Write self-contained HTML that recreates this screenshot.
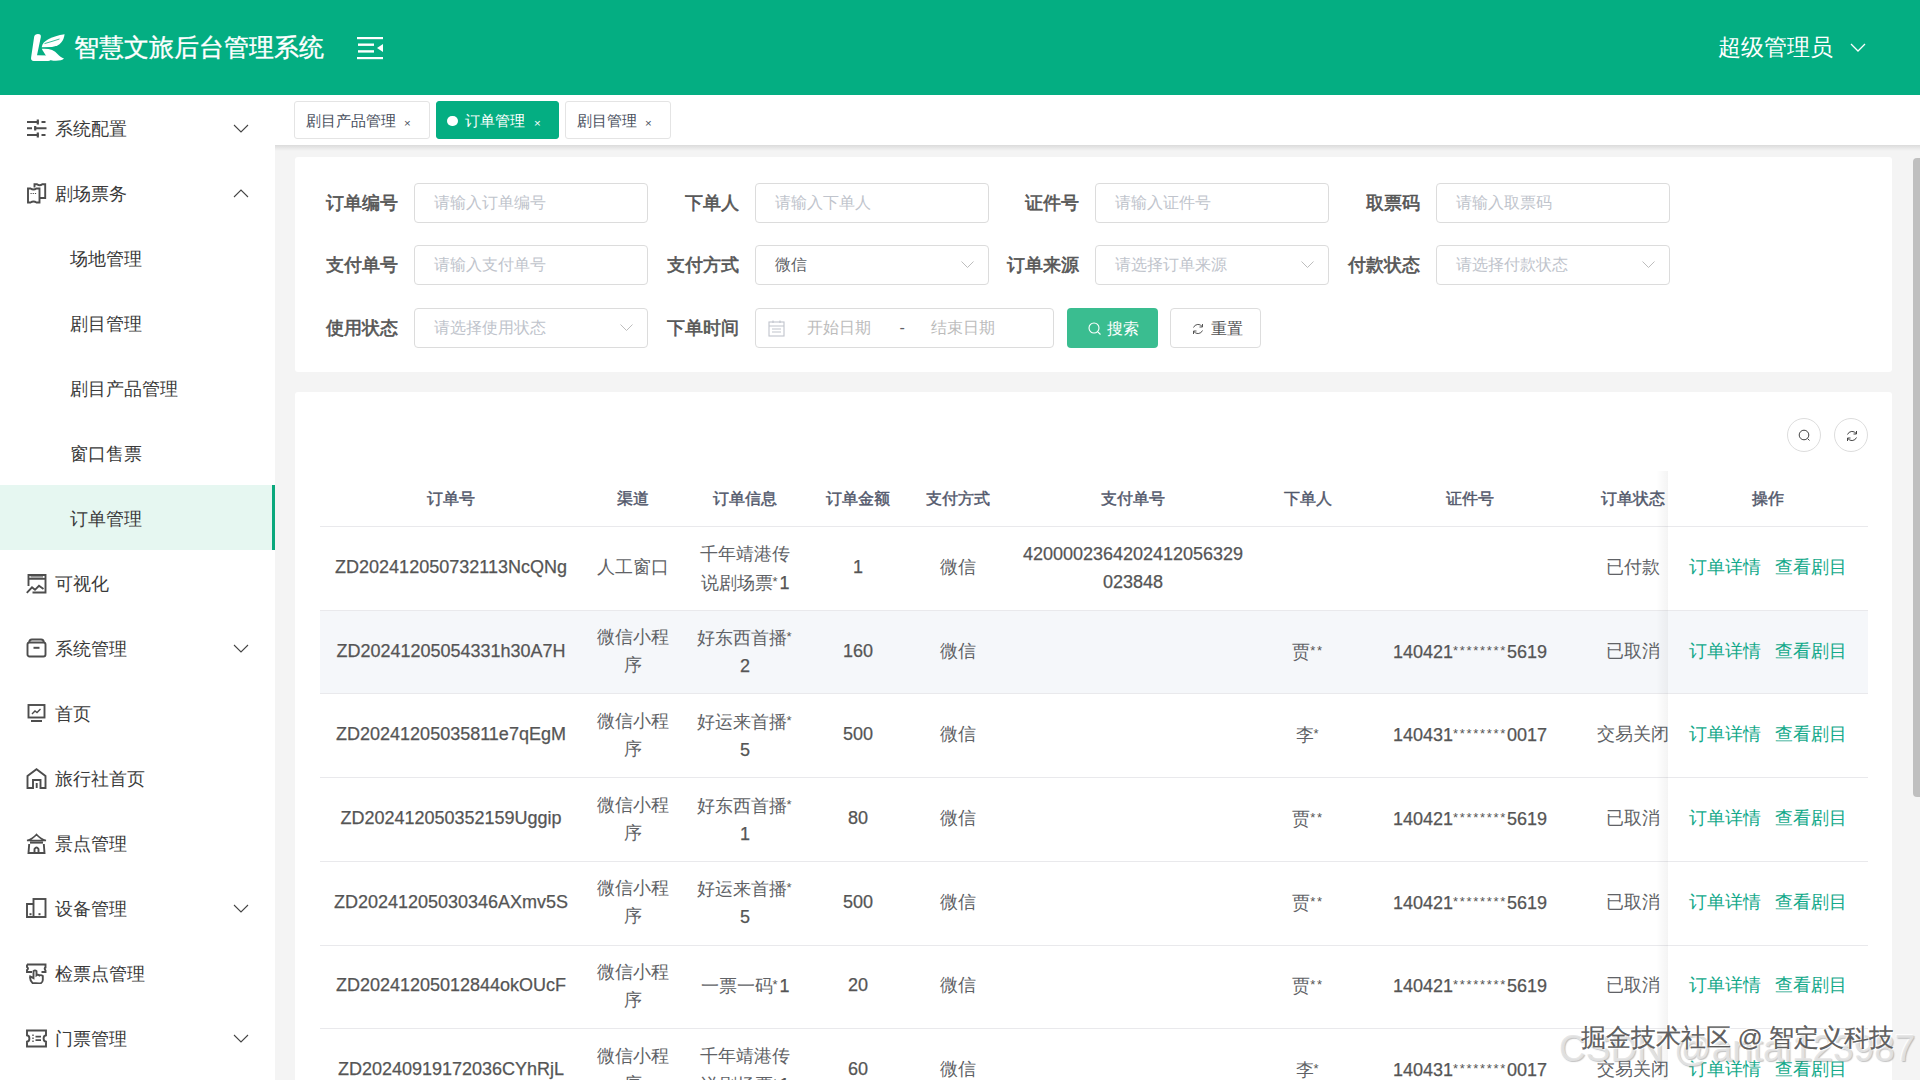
<!DOCTYPE html>
<html><head><meta charset="utf-8">
<style>
*{box-sizing:border-box;margin:0;padding:0}
html,body{width:1920px;height:1080px;overflow:hidden;background:#f4f4f4;font-family:"Liberation Sans",sans-serif}
.a{position:absolute}
#hdr{left:0;top:0;width:1920px;height:95px;background:#04ae82}
#side{left:0;top:95px;width:275px;height:985px;background:#fff}
.mi{position:absolute;left:0;width:275px;height:65px;font-size:17.5px;color:#3a3a3a;line-height:65px}
.mi .t{position:absolute;left:55px;top:2px}
.mi.sub .t{left:70px}
.mi svg.ic{position:absolute;left:26px;top:22.5px}
.mi svg.ch{position:absolute;left:233px;top:29px}
#tabs{left:275px;top:95px;width:1645px;height:50px;background:#fff}
#tabsh{left:275px;top:145px;width:1645px;height:6px;background:linear-gradient(to bottom,rgba(0,0,0,.10),rgba(0,0,0,0))}
.tab{position:absolute;top:6px;height:38px;border:1px solid #e4e4e4;border-radius:3px;background:#fff;font-size:14.8px;color:#495060;line-height:38px}
.tab .x{position:absolute;font-size:11.5px;top:2px}
.card{background:#fff;border-radius:3px}
.lbl{position:absolute;font-size:17.9px;font-weight:normal;-webkit-text-stroke:.6px #555;color:#555;text-align:right;width:120px;line-height:40px}
.inp{position:absolute;height:40px;width:234px;border:1px solid #dcdcdc;border-radius:4px;background:#fff;font-size:16px;color:#bcbcbc;line-height:38.6px;padding-left:19px}
.inp svg{position:absolute;right:13px;top:14px}
.th{position:absolute;top:471px;height:55px;line-height:55px;font-size:15.5px;font-weight:normal;-webkit-text-stroke:.45px #52586b;color:#52586b;text-align:center}
.td{position:absolute;font-size:17.5px;color:#606266;text-align:center;line-height:28px}
.lat{font-size:18px;color:#555;-webkit-text-stroke:.25px #555}
.ast{font-size:13px;letter-spacing:1.7px;color:#555;vertical-align:3px}
.lk{color:#13a98a}
</style></head><body>
<div id="hdr" class="a">
  <svg class="a" style="left:30px;top:33px" width="36" height="30" viewBox="30 33 36 30">
    <path d="M36.5 34.2 Q41.5 33.5 40.8 37.2 L37 55.2 L49.5 55.6 Q52.2 56.2 51.4 59 Q50.8 61 48.2 61 L33.8 61 Q30.6 61 31.1 57.6 L34.2 36.6 Q34.6 34.6 36.5 34.2 Z" fill="#fff"/>
    <path d="M41.7 47.2 C42.5 40.5 52 36.2 64.6 34.3 C63.8 40.5 60.5 46.2 52 46.9 Z" fill="#fff"/>
    <path d="M44.5 43.6 Q52 41.5 59.5 39" stroke="#04ae82" stroke-width="1" fill="none" opacity=".8"/>
    <path d="M41.8 48.8 C49 48.3 54.5 50 57.5 54 C59.5 56.5 61.5 57.5 64 58.6 C62.5 60.8 55 61.5 51 60.2 C47.5 58.5 44 53 41.8 48.8 Z" fill="#fff"/>
  </svg>
  <div class="a" style="left:74px;top:30px;font-size:25px;color:#fff;-webkit-text-stroke:.35px #fff;line-height:34px">智慧文旅后台管理系统</div>
  <svg class="a" style="left:357px;top:36px" width="27" height="24" viewBox="0 0 27 24">
    <rect x="0" y="1" width="26" height="2.2" fill="#fff"/>
    <rect x="1" y="7.5" width="16" height="2.4" fill="#fff"/>
    <rect x="1" y="14.2" width="16" height="2.4" fill="#fff"/>
    <rect x="0" y="21" width="26" height="2.2" fill="#fff"/>
    <path d="M20 12 L26 8 L26 16 Z" fill="#fff"/>
  </svg>
  <div class="a" style="left:1718px;top:31px;font-size:22.7px;color:#fff;line-height:32px">超级管理员</div>
  <svg class="a" style="left:1850px;top:43px" width="16" height="10" viewBox="0 0 16 10"><path d="M1 1 L8 8 L15 1" stroke="#fff" stroke-width="1.3" fill="none"/></svg>
</div>
<div id="side" class="a"><div class="mi" style="top:0px"><svg class="ic" width="21" height="21" viewBox="0 0 21 21" fill="none" stroke="#4d4d4d" stroke-width="1.9"><path d="M1 4H12.5M15.5 4H19.5M1 10.3H6M8.5 10.3H20.5M1 17H12.5M15.5 17H19.5"/><path d="M11.8 1.5V6.5M9.2 8V12.5M11.8 14.5V19.5" stroke-width="2.2"/></svg><span class="t">系统配置</span><svg class="ch" width="16" height="9" viewBox="0 0 16 9"><path d="M1 1 L8 8 L15 1" stroke="#444" stroke-width="1.1" fill="none"/></svg></div><div class="mi" style="top:65px"><svg class="ic" width="21" height="21" viewBox="0 0 21 21" fill="none" stroke="#4d4d4d" stroke-width="1.9"><path d="M8.5 4.5V1.2H11Q13.7 3.2 16.3 1.2H19.2V15H14"/><path d="M2 5.5H4.5Q7.5 7.5 10.5 5.5H13.5V19.5H10.5Q7.5 17.5 4.5 19.5H2Z"/><path d="M4.5 10.5H11" stroke-dasharray="1.2 1" stroke-width="1.2"/></svg><span class="t">剧场票务</span><svg class="ch" width="16" height="9" viewBox="0 0 16 9"><path d="M1 8 L8 1 L15 8" stroke="#444" stroke-width="1.1" fill="none"/></svg></div><div class="mi sub" style="top:130px"><span class="t">场地管理</span></div><div class="mi sub" style="top:195px"><span class="t">剧目管理</span></div><div class="mi sub" style="top:260px"><span class="t">剧目产品管理</span></div><div class="mi sub" style="top:325px"><span class="t">窗口售票</span></div><div class="mi sub" style="top:390px;background:#e6f7f1"><span class="t">订单管理</span><div class="a" style="right:0;top:0;width:3px;height:65px;background:#0aa87d"></div></div><div class="mi" style="top:455px"><svg class="ic" width="21" height="21" viewBox="0 0 21 21" fill="none" stroke="#4d4d4d" stroke-width="1.9"><path d="M2.5 13V2H19.5V19.5H6.5"/><path d="M2.5 5.8H19.5"/><path d="M4.5 3.9H17" stroke-width="1"/><path d="M0.8 19.8L6 14.3L9 16.8L13 12.8L17.5 16"/></svg><span class="t">可视化</span></div><div class="mi" style="top:520px"><svg class="ic" width="21" height="21" viewBox="0 0 21 21" fill="none" stroke="#4d4d4d" stroke-width="1.9"><rect x="1.5" y="4.5" width="18" height="14" rx="2"/><path d="M3.2 4.5Q3.2 1.5 6 1.5H15Q17.8 1.5 17.8 4.5"/><path d="M7.5 9.8H13.5" stroke-width="2"/></svg><span class="t">系统管理</span><svg class="ch" width="16" height="9" viewBox="0 0 16 9"><path d="M1 1 L8 8 L15 1" stroke="#444" stroke-width="1.1" fill="none"/></svg></div><div class="mi" style="top:585px"><svg class="ic" width="21" height="21" viewBox="0 0 21 21" fill="none" stroke="#4d4d4d" stroke-width="1.9"><rect x="2.5" y="2" width="16" height="12.5"/><path d="M6 11L9 8L11 9.5L14.5 6" stroke-width="1.4"/><path d="M5 18H16" stroke-width="2"/></svg><span class="t">首页</span></div><div class="mi" style="top:650px"><svg class="ic" width="21" height="21" viewBox="0 0 21 21" fill="none" stroke="#4d4d4d" stroke-width="1.9"><path d="M1.5 20V8L10.5 1.2L19.5 8V20H14.5V12H7V20Z"/><path d="M10.7 15V20"/></svg><span class="t">旅行社首页</span></div><div class="mi" style="top:715px"><svg class="ic" width="21" height="21" viewBox="0 0 21 21" fill="none" stroke="#4d4d4d" stroke-width="1.9"><path d="M1 7.5Q6 6.5 10.5 1.5Q15 6.5 20 7.5Z" stroke-width="1.6"/><path d="M4 9.5H17" stroke-width="2.2"/><path d="M3.2 11L2.5 20H18.5L17.8 11"/><path d="M8.5 20V16Q10.5 13 12.5 16V20"/></svg><span class="t">景点管理</span></div><div class="mi" style="top:780px"><svg class="ic" width="21" height="21" viewBox="0 0 21 21" fill="none" stroke="#4d4d4d" stroke-width="1.9"><rect x="7.5" y="1" width="12" height="18"/><path d="M7.5 6H1V19H10.5"/><rect x="3.5" y="15.2" width="2" height="2" fill="#4d4d4d" stroke="none"/><rect x="12.5" y="15.2" width="2" height="2" fill="#4d4d4d" stroke="none"/></svg><span class="t">设备管理</span><svg class="ch" width="16" height="9" viewBox="0 0 16 9"><path d="M1 1 L8 8 L15 1" stroke="#444" stroke-width="1.1" fill="none"/></svg></div><div class="mi" style="top:845px"><svg class="ic" width="21" height="21" viewBox="0 0 21 21" fill="none" stroke="#4d4d4d" stroke-width="1.9"><path d="M1 1.5H19.5V4.5Q17.8 5 19.5 7.5V9H15.5M6 9H1V7Q3 5.5 1 4V1.5"/><path d="M6.5 20Q3.5 16.5 4.2 13.5L7.5 15.2V8.2Q9 6.5 10.5 8.2V12.3Q12 11.2 13.5 12.5Q15 11.5 16.8 13V17Q16.5 20.5 13 20.5Z"/></svg><span class="t">检票点管理</span></div><div class="mi" style="top:910px"><svg class="ic" width="21" height="21" viewBox="0 0 21 21" fill="none" stroke="#4d4d4d" stroke-width="1.9"><path d="M1 2.5H20V7.3Q17.6 7.6 17.6 10.5Q17.6 13.4 20 13.7V18.5H1V13.7Q3.4 13.4 3.4 10.5Q3.4 7.6 1 7.3Z"/><path d="M7 6.5V15" stroke-dasharray="1.5 1.5" stroke-width="1.4"/><path d="M9.5 8.7H15M9.5 12.2H15" stroke-width="1.8"/></svg><span class="t">门票管理</span><svg class="ch" width="16" height="9" viewBox="0 0 16 9"><path d="M1 1 L8 8 L15 1" stroke="#444" stroke-width="1.1" fill="none"/></svg></div></div>
<div id="tabs" class="a">
  <div class="tab" style="left:19px;width:136px"><span style="position:absolute;left:11px">剧目产品管理</span><span class="x" style="left:109px">×</span></div>
  <div class="tab" style="left:161px;width:123px;background:#04ae82;border-color:#04ae82;color:#fff"><span style="position:absolute;left:10px;top:13.5px;width:10.5px;height:10.5px;border-radius:6px;background:#fff"></span><span style="position:absolute;left:28px">订单管理</span><span class="x" style="left:97px">×</span></div>
  <div class="tab" style="left:290px;width:106px"><span style="position:absolute;left:11px">剧目管理</span><span class="x" style="left:79px">×</span></div>
</div>
<div id="tabsh" class="a"></div>
<div class="a card" style="left:295px;top:157px;width:1597px;height:215px"></div>
<div class="lbl" style="left:278.0px;top:182.5px">订单编号</div>
<div class="inp" style="left:414.0px;top:183.0px;color:#c0c4cc">请输入订单编号</div>
<div class="lbl" style="left:618.5px;top:182.5px">下单人</div>
<div class="inp" style="left:754.5px;top:183.0px;color:#c0c4cc">请输入下单人</div>
<div class="lbl" style="left:959.0px;top:182.5px">证件号</div>
<div class="inp" style="left:1095.0px;top:183.0px;color:#c0c4cc">请输入证件号</div>
<div class="lbl" style="left:1299.5px;top:182.5px">取票码</div>
<div class="inp" style="left:1435.5px;top:183.0px;color:#c0c4cc">请输入取票码</div>
<div class="lbl" style="left:278.0px;top:244.5px">支付单号</div>
<div class="inp" style="left:414.0px;top:245.0px;color:#c0c4cc">请输入支付单号</div>
<div class="lbl" style="left:618.5px;top:244.5px">支付方式</div>
<div class="inp" style="left:754.5px;top:245.0px;color:#606266">微信<svg width="15" height="9" viewBox="0 0 15 9"><path d="M1.5 1.5L7.5 7.5L13.5 1.5" stroke="#bdbdbd" stroke-width="1" fill="none"/></svg></div>
<div class="lbl" style="left:959.0px;top:244.5px">订单来源</div>
<div class="inp" style="left:1095.0px;top:245.0px;color:#c0c4cc">请选择订单来源<svg width="15" height="9" viewBox="0 0 15 9"><path d="M1.5 1.5L7.5 7.5L13.5 1.5" stroke="#bdbdbd" stroke-width="1" fill="none"/></svg></div>
<div class="lbl" style="left:1299.5px;top:244.5px">付款状态</div>
<div class="inp" style="left:1435.5px;top:245.0px;color:#c0c4cc">请选择付款状态<svg width="15" height="9" viewBox="0 0 15 9"><path d="M1.5 1.5L7.5 7.5L13.5 1.5" stroke="#bdbdbd" stroke-width="1" fill="none"/></svg></div>
<div class="lbl" style="left:278.0px;top:307.5px">使用状态</div>
<div class="inp" style="left:414.0px;top:308.0px;color:#c0c4cc">请选择使用状态<svg width="15" height="9" viewBox="0 0 15 9"><path d="M1.5 1.5L7.5 7.5L13.5 1.5" stroke="#bdbdbd" stroke-width="1" fill="none"/></svg></div>
<div class="lbl" style="left:618.5px;top:307.5px">下单时间</div>
<div class="inp" style="left:754.5px;top:308.0px;width:299px;padding-left:0"><svg style="position:absolute;left:12px;top:11px" width="17" height="17" viewBox="0 0 17 17" fill="none" stroke="#c0c4cc" stroke-width="1.1"><rect x="1" y="2" width="15" height="14"/><path d="M1 6H16M5 0.5V3M12 0.5V3M4 9H13M4 12H13"/></svg><span class="a" style="left:51px">开始日期</span><span class="a" style="left:144px;color:#606266">-</span><span class="a" style="left:175px">结束日期</span></div>
<div class="a" style="left:1067px;top:308px;width:91px;height:40px;background:#3abd90;border-radius:4px;color:#fff;font-size:15.5px;line-height:41px"><svg style="position:absolute;left:21px;top:13.5px" width="14" height="14" viewBox="0 0 14 14" fill="none" stroke="#fff" stroke-width="1.1"><circle cx="6" cy="6" r="5"/><path d="M9.8 9.8L12.5 12.5"/></svg><span class="a" style="left:40px">搜索</span></div>
<div class="a" style="left:1170px;top:308px;width:91px;height:40px;background:#fff;border:1px solid #dddddd;border-radius:4px;color:#555;font-size:15.5px;line-height:39px"><svg style="position:absolute;left:21px;top:14px" width="12" height="12" viewBox="0 0 12 12" fill="none" stroke="#555" stroke-width="1"><path d="M10.5 4A5 5 0 0 0 1.5 4.5M1.5 8A5 5 0 0 0 10.5 7.5"/><path d="M10.5 1V4H7.5M1.5 11V8H4.5"/></svg><span class="a" style="left:40px">重置</span></div>
<div class="a card" style="left:295px;top:392px;width:1597px;height:700px"></div>
<div class="a" style="left:1787px;top:418px;width:34px;height:34px;border:1px solid #dddddd;border-radius:17px;background:#fff"><svg style="position:absolute;left:10px;top:10px" width="14" height="14" viewBox="0 0 14 14" fill="none" stroke="#444" stroke-width="1"><circle cx="6" cy="6" r="4.8"/><path d="M9.6 9.6L11.5 11.5"/></svg></div><div class="a" style="left:1834px;top:418px;width:34px;height:34px;border:1px solid #dddddd;border-radius:17px;background:#fff"><svg style="position:absolute;left:10.5px;top:10.5px" width="12" height="12" viewBox="0 0 12 12" fill="none" stroke="#444" stroke-width="1"><path d="M10.5 4A5 5 0 0 0 1.5 4.5M1.5 8A5 5 0 0 0 10.5 7.5"/><path d="M10.5 1V4H7.5M1.5 11V8H4.5"/></svg></div>
<div class="th" style="left:351.0px;width:200px">订单号</div>
<div class="th" style="left:532.5px;width:200px">渠道</div>
<div class="th" style="left:645.0px;width:200px">订单信息</div>
<div class="th" style="left:758.0px;width:200px">订单金额</div>
<div class="th" style="left:858.0px;width:200px">支付方式</div>
<div class="th" style="left:1033.0px;width:200px">支付单号</div>
<div class="th" style="left:1208.0px;width:200px">下单人</div>
<div class="th" style="left:1370.0px;width:200px">证件号</div>
<div class="th" style="left:1533.0px;width:200px">订单状态</div>
<div class="th" style="left:1668.0px;width:200px">操作</div>
<div class="a" style="left:320px;top:526px;width:1548px;height:1px;background:#e9e9ec"></div>
<div class="a" style="left:320px;top:609.7px;width:1548px;height:1px;background:#e9e9ec"></div>
<div class="td" style="left:321.0px;top:552.9px;width:260px"><span class="lat">ZD202412050732113NcQNg</span></div>
<div class="td" style="left:502.5px;top:552.9px;width:260px">人工窗口</div>
<div class="td" style="left:615.0px;top:539.6px;width:260px">千年靖港传<br>说剧场票<span class="ast">*</span><span class="lat">1</span></div>
<div class="td" style="left:728.0px;top:552.9px;width:260px"><span class="lat">1</span></div>
<div class="td" style="left:828.0px;top:552.9px;width:260px">微信</div>
<div class="td" style="left:1003.0px;top:539.6px;width:260px"><span class="lat">4200002364202412056329</span><br><span class="lat">023848</span></div>
<div class="td" style="left:1178.0px;top:552.9px;width:260px"></div>
<div class="td" style="left:1340.0px;top:552.9px;width:260px"></div>
<div class="td" style="left:1503.0px;top:552.9px;width:260px">已付款</div>
<div class="a" style="left:320px;top:610.7px;width:1348px;height:83px;background:#f5f7fa"></div>
<div class="a" style="left:320px;top:693.4px;width:1548px;height:1px;background:#e9e9ec"></div>
<div class="td" style="left:321.0px;top:636.6px;width:260px"><span class="lat">ZD20241205054331h30A7H</span></div>
<div class="td" style="left:502.5px;top:623.3px;width:260px">微信小程<br>序</div>
<div class="td" style="left:615.0px;top:623.3px;width:260px">好东西首播<span class="ast">*</span><br><span class="lat">2</span></div>
<div class="td" style="left:728.0px;top:636.6px;width:260px"><span class="lat">160</span></div>
<div class="td" style="left:828.0px;top:636.6px;width:260px">微信</div>
<div class="td" style="left:1003.0px;top:636.6px;width:260px"></div>
<div class="td" style="left:1178.0px;top:636.6px;width:260px">贾<span class="ast">**</span></div>
<div class="td" style="left:1340.0px;top:636.6px;width:260px"><span class="lat">140421</span><span class="ast">********</span><span class="lat">5619</span></div>
<div class="td" style="left:1503.0px;top:636.6px;width:260px">已取消</div>
<div class="a" style="left:320px;top:777.1px;width:1548px;height:1px;background:#e9e9ec"></div>
<div class="td" style="left:321.0px;top:720.2px;width:260px"><span class="lat">ZD20241205035811e7qEgM</span></div>
<div class="td" style="left:502.5px;top:707.0px;width:260px">微信小程<br>序</div>
<div class="td" style="left:615.0px;top:707.0px;width:260px">好运来首播<span class="ast">*</span><br><span class="lat">5</span></div>
<div class="td" style="left:728.0px;top:720.2px;width:260px"><span class="lat">500</span></div>
<div class="td" style="left:828.0px;top:720.2px;width:260px">微信</div>
<div class="td" style="left:1003.0px;top:720.2px;width:260px"></div>
<div class="td" style="left:1178.0px;top:720.2px;width:260px">李<span class="ast">*</span></div>
<div class="td" style="left:1340.0px;top:720.2px;width:260px"><span class="lat">140431</span><span class="ast">********</span><span class="lat">0017</span></div>
<div class="td" style="left:1503.0px;top:720.2px;width:260px">交易关闭</div>
<div class="a" style="left:320px;top:860.8px;width:1548px;height:1px;background:#e9e9ec"></div>
<div class="td" style="left:321.0px;top:804.0px;width:260px"><span class="lat">ZD202412050352159Uggip</span></div>
<div class="td" style="left:502.5px;top:790.7px;width:260px">微信小程<br>序</div>
<div class="td" style="left:615.0px;top:790.7px;width:260px">好东西首播<span class="ast">*</span><br><span class="lat">1</span></div>
<div class="td" style="left:728.0px;top:804.0px;width:260px"><span class="lat">80</span></div>
<div class="td" style="left:828.0px;top:804.0px;width:260px">微信</div>
<div class="td" style="left:1003.0px;top:804.0px;width:260px"></div>
<div class="td" style="left:1178.0px;top:804.0px;width:260px">贾<span class="ast">**</span></div>
<div class="td" style="left:1340.0px;top:804.0px;width:260px"><span class="lat">140421</span><span class="ast">********</span><span class="lat">5619</span></div>
<div class="td" style="left:1503.0px;top:804.0px;width:260px">已取消</div>
<div class="a" style="left:320px;top:944.5px;width:1548px;height:1px;background:#e9e9ec"></div>
<div class="td" style="left:321.0px;top:887.6px;width:260px"><span class="lat">ZD20241205030346AXmv5S</span></div>
<div class="td" style="left:502.5px;top:874.4px;width:260px">微信小程<br>序</div>
<div class="td" style="left:615.0px;top:874.4px;width:260px">好运来首播<span class="ast">*</span><br><span class="lat">5</span></div>
<div class="td" style="left:728.0px;top:887.6px;width:260px"><span class="lat">500</span></div>
<div class="td" style="left:828.0px;top:887.6px;width:260px">微信</div>
<div class="td" style="left:1003.0px;top:887.6px;width:260px"></div>
<div class="td" style="left:1178.0px;top:887.6px;width:260px">贾<span class="ast">**</span></div>
<div class="td" style="left:1340.0px;top:887.6px;width:260px"><span class="lat">140421</span><span class="ast">********</span><span class="lat">5619</span></div>
<div class="td" style="left:1503.0px;top:887.6px;width:260px">已取消</div>
<div class="a" style="left:320px;top:1028.2px;width:1548px;height:1px;background:#e9e9ec"></div>
<div class="td" style="left:321.0px;top:971.4px;width:260px"><span class="lat">ZD20241205012844okOUcF</span></div>
<div class="td" style="left:502.5px;top:958.1px;width:260px">微信小程<br>序</div>
<div class="td" style="left:615.0px;top:971.4px;width:260px">一票一码<span class="ast">*</span><span class="lat">1</span></div>
<div class="td" style="left:728.0px;top:971.4px;width:260px"><span class="lat">20</span></div>
<div class="td" style="left:828.0px;top:971.4px;width:260px">微信</div>
<div class="td" style="left:1003.0px;top:971.4px;width:260px"></div>
<div class="td" style="left:1178.0px;top:971.4px;width:260px">贾<span class="ast">**</span></div>
<div class="td" style="left:1340.0px;top:971.4px;width:260px"><span class="lat">140421</span><span class="ast">********</span><span class="lat">5619</span></div>
<div class="td" style="left:1503.0px;top:971.4px;width:260px">已取消</div>
<div class="a" style="left:320px;top:1111.9px;width:1548px;height:1px;background:#e9e9ec"></div>
<div class="td" style="left:321.0px;top:1055.0px;width:260px"><span class="lat">ZD20240919172036CYhRjL</span></div>
<div class="td" style="left:502.5px;top:1041.8px;width:260px">微信小程<br>序</div>
<div class="td" style="left:615.0px;top:1041.8px;width:260px">千年靖港传<br>说剧场票<span class="ast">*</span><span class="lat">1</span></div>
<div class="td" style="left:728.0px;top:1055.0px;width:260px"><span class="lat">60</span></div>
<div class="td" style="left:828.0px;top:1055.0px;width:260px">微信</div>
<div class="td" style="left:1003.0px;top:1055.0px;width:260px"></div>
<div class="td" style="left:1178.0px;top:1055.0px;width:260px">李<span class="ast">*</span></div>
<div class="td" style="left:1340.0px;top:1055.0px;width:260px"><span class="lat">140431</span><span class="ast">********</span><span class="lat">0017</span></div>
<div class="td" style="left:1503.0px;top:1055.0px;width:260px">交易关闭</div>
<div class="a" style="left:1656px;top:471px;width:12px;height:620px;background:linear-gradient(to right,rgba(0,0,0,0),rgba(0,0,0,.045))"></div><div class="a" style="left:1668px;top:471px;width:200px;height:620px;background:#fff">
<div class="th" style="left:0;top:0;width:200px">操作</div>
<div class="a" style="left:0;top:55px;width:200px;height:1px;background:#e9e9ec"></div>
<div class="a" style="left:0;top:138.7px;width:200px;height:1px;background:#e9e9ec"></div>
<div class="td lk" style="left:17px;top:81.8px;width:80px">订单详情</div>
<div class="td lk" style="left:103px;top:81.8px;width:80px">查看剧目</div>
<div class="a" style="left:0;top:139.7px;width:200px;height:83px;background:#f5f7fa"></div>
<div class="a" style="left:0;top:222.4px;width:200px;height:1px;background:#e9e9ec"></div>
<div class="td lk" style="left:17px;top:165.5px;width:80px">订单详情</div>
<div class="td lk" style="left:103px;top:165.5px;width:80px">查看剧目</div>
<div class="a" style="left:0;top:306.1px;width:200px;height:1px;background:#e9e9ec"></div>
<div class="td lk" style="left:17px;top:249.2px;width:80px">订单详情</div>
<div class="td lk" style="left:103px;top:249.2px;width:80px">查看剧目</div>
<div class="a" style="left:0;top:389.8px;width:200px;height:1px;background:#e9e9ec"></div>
<div class="td lk" style="left:17px;top:333.0px;width:80px">订单详情</div>
<div class="td lk" style="left:103px;top:333.0px;width:80px">查看剧目</div>
<div class="a" style="left:0;top:473.5px;width:200px;height:1px;background:#e9e9ec"></div>
<div class="td lk" style="left:17px;top:416.7px;width:80px">订单详情</div>
<div class="td lk" style="left:103px;top:416.7px;width:80px">查看剧目</div>
<div class="a" style="left:0;top:557.2px;width:200px;height:1px;background:#e9e9ec"></div>
<div class="td lk" style="left:17px;top:500.4px;width:80px">订单详情</div>
<div class="td lk" style="left:103px;top:500.4px;width:80px">查看剧目</div>
<div class="a" style="left:0;top:640.9px;width:200px;height:1px;background:#e9e9ec"></div>
<div class="td lk" style="left:17px;top:584.1px;width:80px">订单详情</div>
<div class="td lk" style="left:103px;top:584.1px;width:80px">查看剧目</div>
</div>
<div class="a" style="left:1913px;top:158px;width:7px;height:639px;background:#bfbfbf;border-radius:4px 0 0 4px"></div>
<div class="a" style="left:1559px;top:1026px;font-size:37px;color:rgba(228,228,228,.9);text-shadow:1px 1px 1px rgba(120,120,120,.45),-1px -1px 0 rgba(255,255,255,.9);white-space:nowrap;line-height:46px">CSDN @antai123987</div><div class="a" style="left:1581px;top:1020px;font-size:24.5px;color:rgba(80,80,80,.92);-webkit-text-stroke:.25px rgba(80,80,80,.9);text-shadow:1px 1px 1px rgba(255,255,255,.95),-1px -1px 1px rgba(255,255,255,.9);white-space:nowrap;line-height:36px">掘金技术社区 @ 智定义科技</div>
</body></html>
